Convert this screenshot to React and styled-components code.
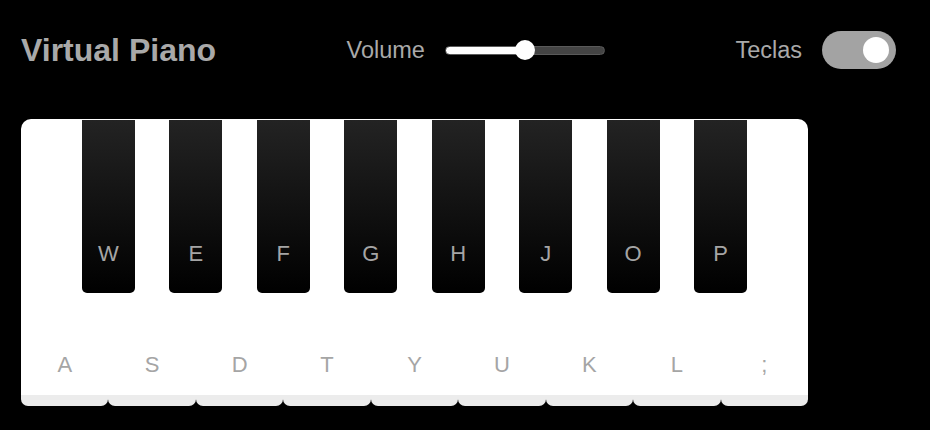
import React, { useState } from 'react'
import styled, { createGlobalStyle } from 'styled-components'

const GlobalStyle = createGlobalStyle`
  html, body {
    margin: 0;
    padding: 0;
    background: #000;
    font-family: "Liberation Sans", Arial, sans-serif;
  }
`

const Page = styled.div`
  width: 875px;
  padding: 31px 0 0 21px;
`

const Header = styled.header`
  display: flex;
  align-items: center;
  justify-content: space-between;
  height: 38px;
`

const Title = styled.h1`
  margin: 0;
  font-size: 32px;
  font-weight: 700;
  color: #a9a9a9;
`

const Control = styled.div`
  display: flex;
  align-items: center;
  gap: ${p => p.gap || 20}px;
`

const Label = styled.span`
  font-size: 23.5px;
  color: #a9a9a9;
`

const Range = styled.input`
  -webkit-appearance: none;
  appearance: none;
  width: 160px;
  height: 9px;
  margin: 0;
  border-radius: 5px;
  border: 1px solid #5a5a5a;
  box-sizing: border-box;
  outline: none;
  background: linear-gradient(to right, #fff 0%, #fff ${p => p.value}%, #444 ${p => p.value}%, #444 100%);

  &::-webkit-slider-thumb {
    -webkit-appearance: none;
    width: 20px;
    height: 20px;
    border-radius: 50%;
    background: #fff;
    border: none;
    cursor: pointer;
  }
`

const Switch = styled.button`
  position: relative;
  width: 74px;
  height: 38px;
  padding: 0;
  border: none;
  border-radius: 19px;
  background: #a3a3a3;
  cursor: pointer;

  &::after {
    content: '';
    position: absolute;
    top: 6px;
    left: ${p => (p.on ? '41px' : '7px')};
    width: 26px;
    height: 26px;
    border-radius: 50%;
    background: #fff;
  }
`

const Keyboard = styled.div`
  display: flex;
  width: 787px;
  height: 287px;
  margin-top: 50px;
  border-radius: 10px 10px 0 0;
  overflow: hidden;
`

const WhiteKey = styled.div`
  position: relative;
  flex: 1;
  display: flex;
  flex-direction: column;
  justify-content: flex-end;
  align-items: center;
  padding-bottom: 18px;
  background: #fff;
  border-bottom: 11px solid #ececec;
  border-radius: 0 0 7px 7px;
  box-sizing: border-box;
`

const BlackKey = styled.div`
  position: absolute;
  top: 1px;
  right: -26.5px;
  z-index: 1;
  width: 53px;
  height: 173px;
  display: flex;
  flex-direction: column;
  justify-content: flex-end;
  align-items: center;
  padding-bottom: 27px;
  box-sizing: border-box;
  background: linear-gradient(to bottom, #232323, #000);
  border-radius: 0 0 5px 5px;
`

const KeyLabel = styled.span`
  font-size: 22px;
  line-height: 25px;
  color: #a5a5a5;
`

const whites = ['A', 'S', 'D', 'T', 'Y', 'U', 'K', 'L', ';']
const blacks = ['W', 'E', 'F', 'G', 'H', 'J', 'O', 'P']

export default function App() {
  const [volume, setVolume] = useState(50)
  const [showKeys, setShowKeys] = useState(true)

  return (
    <>
      <GlobalStyle />
      <Page>
        <Header>
          <Title>Virtual Piano</Title>
          <Control>
            <Label>Volume</Label>
            <Range
              type="range"
              min="0"
              max="100"
              value={volume}
              onChange={e => setVolume(Number(e.target.value))}
            />
          </Control>
          <Control gap={20}>
            <Label>Teclas</Label>
            <Switch on={showKeys} onClick={() => setShowKeys(!showKeys)} />
          </Control>
        </Header>
        <Keyboard>
          {whites.map((w, i) => (
            <WhiteKey key={w}>
              {blacks[i] && (
                <BlackKey>
                  {showKeys && <KeyLabel>{blacks[i]}</KeyLabel>}
                </BlackKey>
              )}
              {showKeys && <KeyLabel>{w}</KeyLabel>}
            </WhiteKey>
          ))}
        </Keyboard>
      </Page>
    </>
  )
}
